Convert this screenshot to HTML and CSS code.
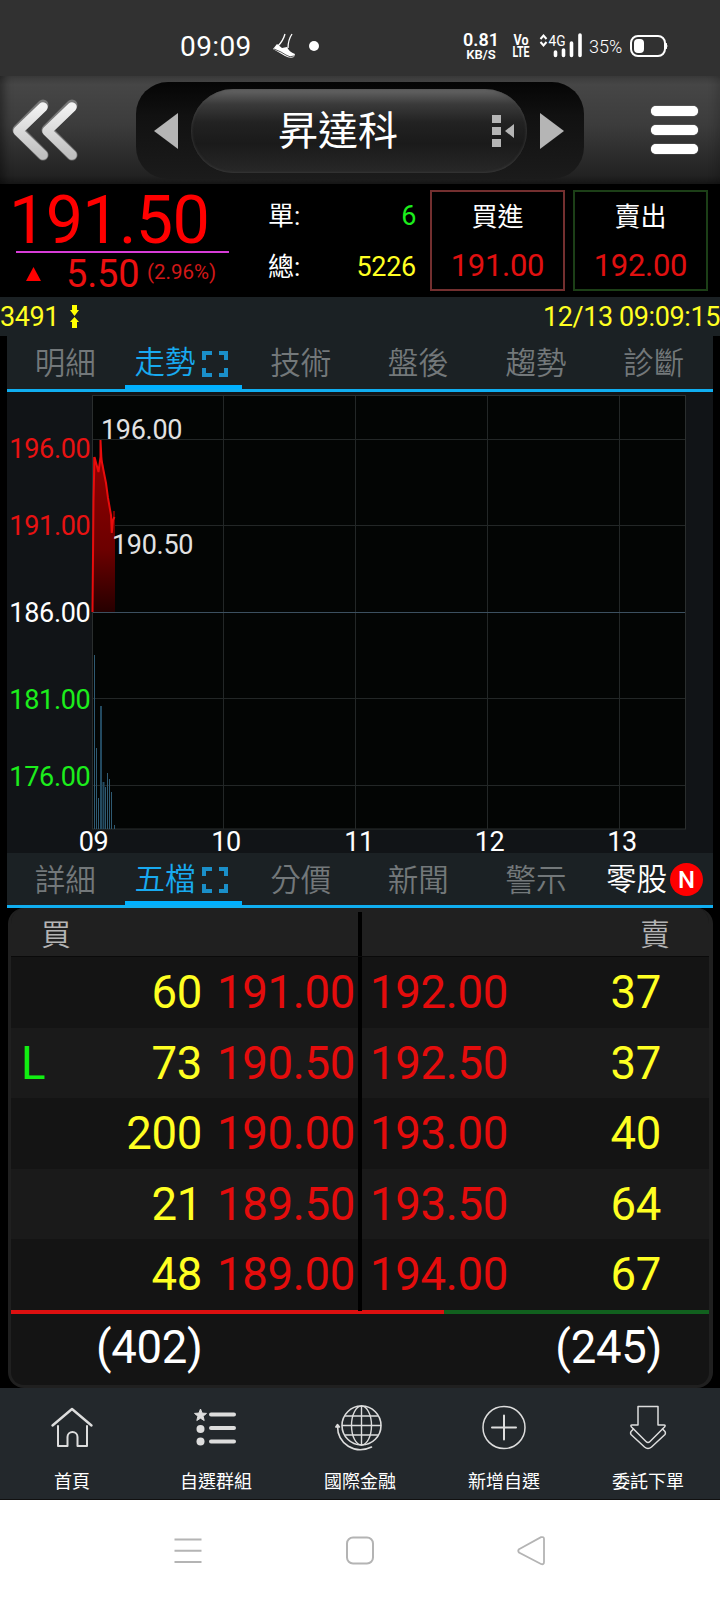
FILE: index.html
```
<!DOCTYPE html>
<html lang="zh-Hant">
<head>
    <meta charset="UTF-8">
    <meta name="viewport" content="width=device-width, initial-scale=1.0">
    <title>昇達科 3491</title>
    <link rel="stylesheet" href="styles.css">
</head>
<body>
    <div class="status">
        <span class="clock">09:09</span>
        <svg class="shoe" width="22" height="25" viewBox="0 0 22 25">
            <path d="M12 0 Q10 7 5 12M19 0 Q15 6 15 14" fill="none" stroke="#fff" stroke-width="1.3"/>
            <path d="M4 10 L9 14 L14 13 Q16 18 22 20 L21 23 Q17 25 12 22 L0 15 Z" fill="#fff"/>
            <path d="M1 15 Q9 18 13 21 T21 22" fill="none" stroke="#313131" stroke-width=".8"/>
        </svg>
        <span class="dot"></span>
        <div class="speed"><span>0.81</span><small>KB/S</small></div>
        <svg class="volte" width="18" height="26" viewBox="0 0 18 26">
            <text x="9" y="12" textLength="15" lengthAdjust="spacingAndGlyphs">Vo</text>
            <text x="9" y="24" textLength="17" lengthAdjust="spacingAndGlyphs">LTE</text>
        </svg>
        <svg class="signal" width="44" height="26" viewBox="0 0 44 26">
            <path d="M1.500 6 L4.500 2.500 L7.500 6M1.500 9 L4.500 12.500 L7.500 9" fill="none" stroke="#fff" stroke-width="2"/>
            <text x="9.500" y="13" class="net" textLength="17" lengthAdjust="spacingAndGlyphs">4G</text>
            <path d="M16.500 19v3.500M24.500 17v5.500M32.500 10v12.500M41 2v20.500" stroke="#fff" stroke-width="3.600" stroke-linecap="round"/>
        </svg>
        <span class="percent">35%</span>
        <svg class="battery" width="38" height="22" viewBox="0 0 38 22">
            <rect x="1" y="1" width="34" height="20" rx="7" fill="none" stroke="#fff" stroke-width="2"/>
            <rect x="4" y="4" width="10" height="14" rx="4" fill="#fff"/>
            <path d="M36 8 Q38 11 36 14Z" fill="#fff" stroke="#fff"/>
        </svg>
    </div>

    <div class="header">
        <svg class="back" width="68" height="64" viewBox="0 0 68 64">
            <defs>
                <linearGradient id="silver" x1="0" y1="0" x2="0" y2="1">
                    <stop offset="0" stop-color="#f2f2f2"/>
                    <stop offset="1" stop-color="#c0c0c0"/>
                </linearGradient>
            </defs>
            <path d="M31 6 L6 31 L31 56M60 6 L35 31 L60 56" fill="none" stroke="#777" stroke-width="11" stroke-linecap="round" stroke-linejoin="round"/>
            <path d="M31 8 L6 32 L31 56M60 8 L35 32 L60 56" fill="none" stroke="url(#silver)" stroke-width="9.500" stroke-linecap="round" stroke-linejoin="round"/>
        </svg>
        <div class="selector">
            <svg width="24" height="36" viewBox="0 0 24 36"><path d="M0 18 L24 0 V36Z" fill="#b5b5b5"/></svg>
            <div class="pill">
                <span class="name">昇達科</span>
                <svg class="more" width="24" height="34" viewBox="0 0 24 34">
                    <path d="M1 1h9v8h-9zM1 13h9v8h-9zM1 25h9v8h-9zM14 17l9-7v14z" fill="#b5b5b5"/>
                </svg>
            </div>
            <svg width="24" height="36" viewBox="0 0 24 36"><path d="M24 18 L0 0 V36Z" fill="#b5b5b5"/></svg>
        </div>
        <div class="menu"><i></i><i></i><i></i></div>
    </div>

    <div class="quote">
        <div class="deal">
            <div class="price">191.50</div>
            <div class="change">
                <svg width="15" height="14" viewBox="0 0 15 14"><path d="M7.500 0 L15 14 H0Z" fill="#f00"/></svg>
                <span class="diff">5.50</span>
                <span class="ratio">(2.96%)</span>
            </div>
        </div>
        <div class="volume">
            <div><span>單:</span><b class="green">6</b></div>
            <div><span>總:</span><b class="yellow">5226</b></div>
        </div>
        <div class="order buy"><span>買進</span><b>191.00</b></div>
        <div class="order sell"><span>賣出</span><b>192.00</b></div>
    </div>

    <div class="info">
        <span>3491</span>
        <svg width="9" height="23" viewBox="0 0 9 23">
            <path d="M2 0h5v5h2L4.500 11 0 5h2zM2 23h5v-6h2L4.500 12 0 17h2z" fill="#ff0"/>
        </svg>
        <span class="time">12/13 09:09:15</span>
    </div>

    <div class="tabs">
        <span>明細</span>
        <span class="active">走勢<svg width="26" height="26" viewBox="0 0 26 26"><path d="M2 9V2h8M17 2h7v7M24 17v7h-7M10 24H2v-7" fill="none" stroke="#1a8fc9" stroke-width="4"/></svg></span>
        <span>技術</span>
        <span>盤後</span>
        <span>趨勢</span>
        <span>診斷</span>
    </div>

    <div class="chart">
        <svg width="706" height="461" viewBox="7 392 706 461">
            <defs>
                <linearGradient id="fall" x1="0" y1="0" x2="0" y2="1">
                    <stop offset="0" stop-color="#900000"/>
                    <stop offset=".6" stop-color="#6c0000"/>
                    <stop offset="1" stop-color="#260000"/>
                </linearGradient>
            </defs>
            <rect x="92.500" y="395.500" width="593" height="433.500" fill="#030504" stroke="#2a2e2e"/>
            <path d="M223.500 396V829M355.500 396V829M487.500 396V829M619.500 396V829" class="grid"/>
            <path d="M93 439.500H685M93 525.500H685M93 698.500H685M93 785.500H685" class="grid"/>
            <path d="M93 612.500H685" stroke="#3c5060"/>
            <!-- price -->
            <path d="M93 612V457h2l3 14 2-12 2-2 4 27 5 30 1 13 1-16h2V612z" fill="url(#fall)"/>
            <path d="M92.500 612 L93.500 500 L94.500 457 L98.500 472 L100.500 457 V440 L101.500 460 L104 473 L106 483 L108 498 L111 515 L111.800 533 L113 520 L114.500 517" fill="none" stroke="#e80c0c" stroke-width="2"/>
            <!-- volume -->
            <path d="M94.500 655V829M96.500 748V829M98.500 798V829M105.500 787V829M107.500 773V829M109.500 779V829M111.500 792V829M114.500 825V829" stroke="#2f5a72"/>
            <path d="M101 706V829M103.500 782V829" stroke="#234a60" stroke-width="2"/>
            <g class="axis" text-anchor="end">
                <text x="90.500" y="458" fill="#e81212">196.00</text>
                <text x="90.500" y="535" fill="#e81212">191.00</text>
                <text x="90.500" y="622" fill="#fff">186.00</text>
                <text x="90.500" y="709" fill="#1cee1c">181.00</text>
                <text x="90.500" y="786" fill="#1cee1c">176.00</text>
            </g>
            <g class="axis" fill="#e2e2e2">
                <text x="101" y="439">196.00</text>
                <text x="112" y="554">190.50</text>
            </g>
            <g class="axis" fill="#fff" text-anchor="middle">
                <text x="93.500" y="851">09</text>
                <text x="226" y="851">10</text>
                <text x="359" y="851">11</text>
                <text x="489.500" y="851">12</text>
                <text x="622" y="851">13</text>
            </g>
        </svg>
    </div>

    <div class="tabs">
        <span>詳細</span>
        <span class="active">五檔<svg width="26" height="26" viewBox="0 0 26 26"><path d="M2 9V2h8M17 2h7v7M24 17v7h-7M10 24H2v-7" fill="none" stroke="#1a8fc9" stroke-width="4"/></svg></span>
        <span>分價</span>
        <span>新聞</span>
        <span>警示</span>
        <span class="odd">零股<em>N</em></span>
    </div>

    <div class="book">
        <div class="head"><span>買</span><span>賣</span></div>
        <div class="row"><i></i><b>60</b><u>191.00</u><s></s><u>192.00</u><b>37</b></div>
        <div class="row"><i>L</i><b>73</b><u>190.50</u><s></s><u>192.50</u><b>37</b></div>
        <div class="row"><i></i><b>200</b><u>190.00</u><s></s><u>193.00</u><b>40</b></div>
        <div class="row"><i></i><b>21</b><u>189.50</u><s></s><u>193.50</u><b>64</b></div>
        <div class="row"><i></i><b>48</b><u>189.00</u><s></s><u>194.00</u><b>67</b></div>
        <div class="ratio-bar"><div style="width: 62.1%"></div></div>
        <div class="total"><span>(402)</span><span>(245)</span></div>
    </div>

    <div class="nav">
        <div>
            <svg width="44" height="46" viewBox="0 0 44 46" class="line">
                <path d="M2.500 20.500 L22 4 L41.500 20.500" stroke-width="2.400"/>
                <path d="M8 21V41H17.500V32a5 5 0 0 1 10 0V41H37V21" stroke-width="2"/>
            </svg>
            <span>首頁</span>
        </div>
        <div>
            <svg width="44" height="46" viewBox="0 0 44 46">
                <path d="M6.500 4l1.600 4.100 4.400.3-3.400 2.800 1.100 4.300L6.500 13.200l-3.700 2.300 1.100-4.300L.5 8.400l4.400-.3z" fill="#ddd" stroke="#ddd"/>
                <circle cx="6.500" cy="24" r="4" fill="#ddd"/>
                <circle cx="6.500" cy="36.500" r="4" fill="#ddd"/>
                <path d="M17 9.500h23M17 23h23M17 36.500h23" stroke="#ddd" stroke-width="4" stroke-linecap="round"/>
            </svg>
            <span>自選群組</span>
        </div>
        <div>
            <svg width="50" height="46" viewBox="0 0 50 46" class="line">
                <circle cx="26.500" cy="20.500" r="19.500" stroke-width="1.600"/>
                <ellipse cx="26.500" cy="20.500" rx="10" ry="19.500" stroke-width="1.400"/>
                <path d="M26.500 1v39M7.500 20.500h38M10.500 11h32M10.500 30h32" stroke-width="1.400"/>
                <path d="M2.500 21 C2.500 39 20 50 36.500 42" stroke-width="1.600"/>
                <path d="M.8 22 L2.500 19.500 L4.500 22z" stroke-width="1.500"/>
            </svg>
            <span>國際金融</span>
        </div>
        <div>
            <svg width="44" height="46" viewBox="0 0 44 46" class="line">
                <circle cx="22" cy="22.500" r="21" stroke-width="1.500"/>
                <path d="M22 10.500v24M10 22.500h24" stroke-width="2"/>
            </svg>
            <span>新增自選</span>
        </div>
        <div>
            <svg width="44" height="46" viewBox="0 0 44 46" class="line">
                <path d="M12 1.500H32V20H38Q40 20 38.500 22L24 36.500Q22 38.500 20 36.500L5.500 22Q4 20 6 20H12Z" stroke-width="1.500"/>
                <path d="M7.500 24L5 26.500Q4 28 5 29.500L18.500 42Q22 45 25.500 42L39 29.500Q40 28 39 26.500L36.500 24" stroke-width="1.500"/>
            </svg>
            <span>委託下單</span>
        </div>
    </div>

    <div class="system">
        <svg width="28" height="30" viewBox="0 0 28 30"><path d="M.5 3.500h27M.5 14.800h27M.5 26h27" stroke="#b4b4b4" stroke-width="2"/></svg>
        <svg width="28" height="30" viewBox="0 0 28 30"><rect x="1" y="1.500" width="26" height="26" rx="6" fill="none" stroke="#b4b4b4" stroke-width="2"/></svg>
        <svg width="28" height="30" viewBox="0 0 28 30"><path d="M2 13.200 L24 1.200 Q27 .5 27 3 V26 Q27 29 24 28 L2 16.500 Q.5 15 2 13.200Z" fill="none" stroke="#b4b4b4" stroke-width="1.800"/></svg>
    </div>
</body>
</html>
```
FILE: styles.css
```
* {
    box-sizing: border-box;
}

body {
    margin: 0;
    width: 720px;
    height: 1600px;
    overflow: hidden;
    background-color: #000;
    color: #fff;
    font-family: Roboto, "Noto Sans CJK TC", sans-serif;
    font-weight: 400;
}

svg {
    display: block;
    flex: none;
    overflow: visible;
}

b, i, u, s, em {
    font-weight: normal;
    font-style: normal;
    text-decoration: none;
}

/* 狀態列 */
.status {
    height: 76px;
    background-color: #313131;
    display: flex;
    align-items: center;
    padding: 16px 0 0 180px;
}

.clock {
    width: 93px;
    font-size: 28px;
    letter-spacing: 0.4px;
}

.dot {
    width: 10px;
    height: 10px;
    margin: 0 144px 0 14px;
    border-radius: 50%;
    background-color: #fff;
}

.speed {
    width: 36px;
    font-size: 18px;
    font-weight: 600;
    text-align: center;
}

.speed span, .speed small {
    display: block;
    line-height: 16px;
}

.speed small {
    font-size: 13px;
    line-height: 13px;
}

.volte {
    margin: 0 9px 0 13px;
    fill: #fff;
    font-size: 15px;
    font-weight: 700;
    text-anchor: middle;
}

.net {
    font-size: 15px;
    fill: #fff;
}

.percent {
    width: 40px;
    padding-left: 6px;
    font-size: 18px;
    font-weight: 350;
}

.battery {
    margin-left: 7px;
}

/* 標題列 */
.header {
    height: 108px;
    display: flex;
    align-items: flex-start;
    background: linear-gradient(#3a3a3a, #464646 8%, #3c3c3c 45%, #222 92%, #161616);
    box-shadow: inset 12px 0 8px -8px rgba(0, 0, 0, 0.4), inset -12px 0 8px -8px rgba(0, 0, 0, 0.15);
}

.back {
    margin: 23px 56px 0 12px;
}

.selector {
    width: 448px;
    height: 97px;
    margin-top: 6px;
    border-radius: 32px;
    background: linear-gradient(#050505, #111 35%, #1b1b1b);
    display: flex;
    align-items: center;
    justify-content: space-between;
    padding: 0 20px 0 18px;
}

.pill {
    width: 336px;
    height: 84px;
    border-radius: 42px;
    background: linear-gradient(#666, #3a3a3a 18%, #222 40%, #1a1a1a 65%, #282828);
    box-shadow: inset 0 0 3px #444;
    display: flex;
    align-items: center;
    padding: 0 12px 0 87px;
}

.name {
    flex: 1;
    font-size: 40px;
    line-height: 80px;
    padding-top: 3px;
}

.menu {
    display: flex;
    flex-direction: column;
    gap: 9px;
    margin: 30px 0 0 67px;
}

.menu i {
    width: 47px;
    height: 10px;
    border-radius: 5px;
    background-color: #fff;
    box-shadow: 0 0 1px #fff;
}

/* 報價 */
.quote {
    height: 113px;
    display: flex;
    align-items: flex-start;
}

.deal {
    width: 268px;
}

.price {
    width: 213px;
    height: 69px;
    margin-left: 16px;
    border-bottom: 2px solid #d83cd8;
    color: #f00;
    font-size: 66.5px;
    letter-spacing: -0.7px;
    line-height: 72px;
    text-indent: -7px;
}

.change {
    height: 44px;
    display: flex;
    align-items: center;
    padding: 0 0 2px 26px;
}

.diff {
    width: 81px;
    margin-left: 25px;
    color: #ec1010;
    font-size: 38px;
    letter-spacing: -0.2px;
    line-height: 42px;
}

.ratio {
    color: #d01818;
    font-size: 20.5px;
    line-height: 36px;
    margin-bottom: 4px;
}

.volume {
    width: 148px;
    margin-right: 14px;
    padding-top: 6px;
}

.volume div {
    height: 51px;
    display: flex;
    justify-content: space-between;
    font-size: 26px;
    line-height: 52px;
}

.volume b {
    font-size: 27px;
    letter-spacing: -0.3px;
}

.green {
    color: #1cee1c;
}

.yellow {
    color: #ff2;
}

.order {
    width: 135px;
    height: 101px;
    margin: 6px 8px 0 0;
    border: 2px solid #732f2f;
    text-align: center;
}

.order.sell {
    border-color: #1c3f17;
    margin-right: 0;
}

.order span, .order b {
    display: block;
    font-size: 26px;
    line-height: 51px;
}

.order b {
    color: #e01010;
    font-size: 31px;
    letter-spacing: -0.3px;
    line-height: 45px;
}

/* 代碼與時間 */
.info {
    height: 39px;
    display: flex;
    align-items: center;
    background-color: #1b2124;
    color: #ff2;
    font-size: 27px;
    letter-spacing: -0.4px;
    line-height: 38px;
}

.info svg {
    margin-left: 11px;
}

.time {
    margin-left: auto;
}

/* 分頁 */
.tabs {
    height: 56px;
    margin: 0 7px;
    display: grid;
    grid-template-columns: repeat(6, 1fr);
    background-color: #1b2124;
    border-bottom: 3px solid #10aef0;
    color: #73787a;
    font-size: 30.5px;
    font-weight: 350;
    line-height: 55px;
    text-align: center;
}

.tabs span {
    height: 53px;
    padding-right: 1px;
}

.tabs .active {
    display: flex;
    justify-content: center;
    align-items: center;
    gap: 7px;
    padding: 5px 4px 0 0;
    border-bottom: 4px solid #00b0ff;
    line-height: 44px;
    color: #18aaf0;
}

.active svg {
    margin-top: 1px;
}

.tabs .odd {
    display: flex;
    justify-content: flex-end;
    align-items: center;
    gap: 3px;
    padding-right: 10px;
    color: #fff;
}

.odd em {
    width: 33px;
    height: 33px;
    border-radius: 50%;
    background-color: #f00;
    font-size: 24px;
    font-weight: 500;
    line-height: 34px;
}

/* 走勢圖 */
.chart {
    height: 461px;
    margin: 0 7px;
    background-color: #111417;
}

.grid {
    stroke: #232727;
}

.axis {
    font-size: 27px;
    letter-spacing: -0.3px;
}

.chart + .tabs {
    height: 55px;
}

.chart + .tabs .active {
    height: 52px;
}

/* 五檔 */
.book {
    height: 480px;
    margin: 0 7px 0 8px;
    border: 3px solid #202020;
    border-right-width: 4px;
    border-top-width: 0;
    border-radius: 16px;
    overflow: hidden;
    background-color: #141414;
}

.head {
    height: 49px;
    display: flex;
    justify-content: space-between;
    padding: 1px 39px 0 30px;
    background: linear-gradient(#000, #000) 347px 4px / 4px 45px no-repeat #202020;
    border-bottom: 1px solid #0a0a0a;
    color: #b4b4b4;
    font-size: 30px;
    font-weight: 350;
    line-height: 52px;
}

.row {
    height: 70.6px;
    display: grid;
    grid-template-columns: 70px 121px 153px 6px 147px 1fr;
    padding-right: 48px;
    font-size: 45.5px;
    letter-spacing: -0.3px;
    line-height: 72px;
    text-align: right;
}

.row:nth-child(odd) {
    background-color: #1a1a1a;
}

.row i {
    padding-left: 10px;
    color: #1e1;
    text-align: left;
}

.row b {
    color: #ff2;
}

.row u {
    color: #e40c0c;
}

.row s {
    width: 4px;
    margin-left: 3px;
    background-color: #000;
}

.ratio-bar {
    height: 4px;
    background-color: #11601e;
}

.ratio-bar div {
    height: 4px;
    background-color: #dc1010;
}

.total {
    display: flex;
    justify-content: space-between;
    padding: 0 47px 0 85px;
    font-size: 45.5px;
    letter-spacing: -0.3px;
    line-height: 68px;
}

/* 下方選單 */
.nav {
    height: 112px;
    display: grid;
    grid-template-columns: repeat(5, 1fr);
    background-color: #23282c;
    border-bottom: 1px solid #111;
}

.nav div {
    display: flex;
    flex-direction: column;
    align-items: center;
    padding-top: 17px;
    font-size: 18px;
    line-height: 26px;
}

.nav span {
    margin-top: 18px;
}

.line {
    fill: none;
    stroke: #ddd;
    stroke-linejoin: round;
    stroke-linecap: round;
}

.system {
    height: 100px;
    display: flex;
    align-items: center;
    justify-content: space-between;
    padding: 2px 175px 0 174px;
    background-color: #fff;
}
```
